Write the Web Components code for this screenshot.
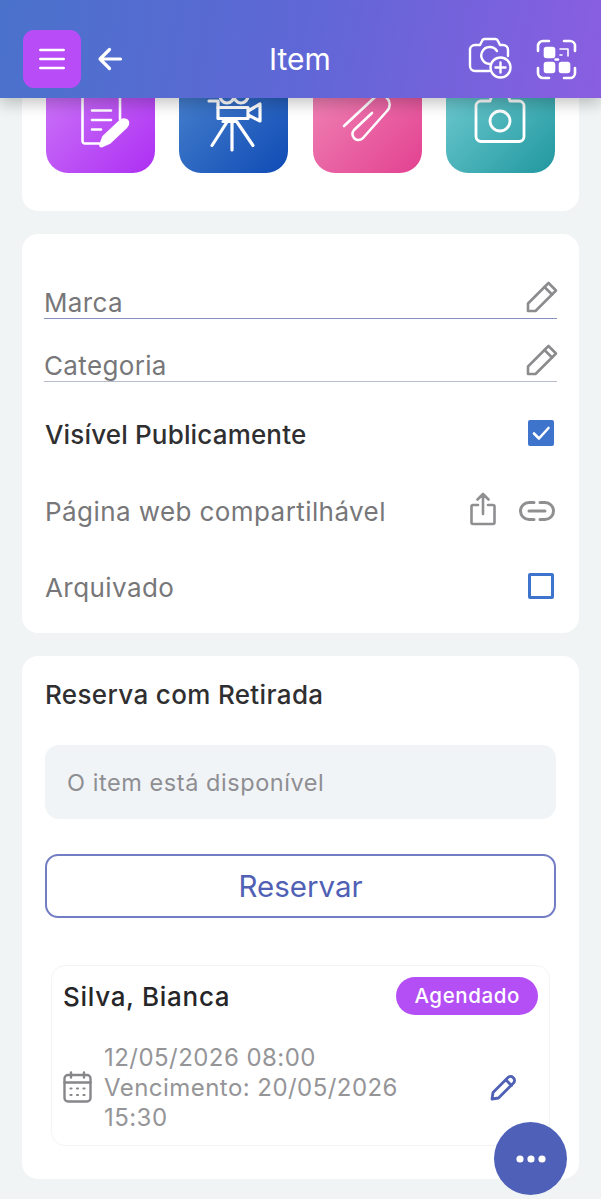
<!DOCTYPE html>
<html lang="pt">
<head>
<meta charset="utf-8">
<title>Item</title>
<style>
  html, body { margin: 0; padding: 0; }
  body {
    width: 601px;
    height: 1199px;
    overflow: hidden;
    background: #f0f4f5;
    font-family: Inter, "Liberation Sans", sans-serif;
  }
</style>
</head>
<body>
<item-page></item-page>

<script>
class AppHeader extends HTMLElement {
  constructor() {
    super();
    this.attachShadow({ mode: 'open' });
  }

  connectedCallback() {
    this.shadowRoot.innerHTML = `
      <style>
        :host {
          display: grid;
          grid-template-columns: 1fr auto 1fr;
          align-items: center;
          height: 98px;
          padding: 20px 24px 0 23px;
          box-sizing: border-box;
          position: relative;
          z-index: 5;
          color: #fff;
          background: linear-gradient(100deg, #4a72cb 0%, #5f67d6 50%, #8a5ee1 100%);
          box-shadow: 0 6px 14px rgba(0, 0, 0, 0.22);
        }
        .left, .right { display: flex; align-items: center; }
        .right { justify-content: flex-end; gap: 24px; }
        .menu {
          width: 58px;
          height: 58px;
          border-radius: 11px;
          background: #b84cf6;
          display: flex;
          align-items: center;
          justify-content: center;
        }
        .back { margin-left: 16px; display: flex; }
        .title { font-size: 30px; font-weight: 400; line-height: 38px; }
        .cam { margin-top: -3px; }
        svg { display: block; }
      </style>
      <div class="left">
        <div class="menu">
          <svg width="26" height="22" viewBox="0 0 26 22" fill="none" stroke="#fff" stroke-width="2.6" stroke-linecap="round">
            <path d="M1.3 2h23.4M1.300 11h23.4M1.300 20h23.400"/>
          </svg>
        </div>
        <div class="back">
          <svg width="26" height="26" viewBox="0 0 26 26" fill="none" stroke="#fff" stroke-width="3.2" stroke-linecap="round" stroke-linejoin="round">
            <path d="M23.500 13H3M12.500 3.500 3 13l9.500 9.500"/>
          </svg>
        </div>
      </div>
      <div class="title">Item</div>
      <div class="right">
        <svg class="cam" width="44" height="42" viewBox="0 0 44 42" fill="none" stroke="#fff" stroke-width="2.4" stroke-linecap="round" stroke-linejoin="round">
          <path d="M21 34H7a5 5 0 0 1-5-5V13a5 5 0 0 1 5-5h5l2-4a3 3 0 0 1 3-2h10a3 3 0 0 1 3 2l2 4h3a5 5 0 0 1 5 5v6"/>
          <path d="M22 27a8.500 8.500 0 1 1 7-13"/>
          <circle cx="32.500" cy="30.500" r="10"/>
          <path d="M32.500 25.500v10M27.500 30.500h10"/>
        </svg>
        <svg width="41" height="41" viewBox="0 0 41 41" fill="none" stroke="#fff" stroke-width="2.6" stroke-linecap="round" stroke-linejoin="round">
          <path d="M2 12V7a5 5 0 0 1 5-5h6M28 2h6a5 5 0 0 1 5 5v5M39 29v5a5 5 0 0 1-5 5h-6M13 39H7a5 5 0 0 1-5-5v-5"/>
          <rect x="9" y="9" width="9" height="9" rx="1.500" fill="#fff"/>
          <rect x="9" y="24" width="9" height="9" rx="1.500" fill="#fff"/>
          <rect x="24" y="24" width="9" height="9" rx="1.500" fill="#fff"/>
          <path d="M24 10h8v7M24 16h2" stroke-width="1.600"/>
          <path d="M19.500 20.500h2.500" stroke-width="2.400"/>
        </svg>
      </div>
    `;
  }
}

class ActionTile extends HTMLElement {
  constructor() {
    super();
    this.attachShadow({ mode: 'open' });
  }

  connectedCallback() {
    const from = this.getAttribute('from');
    const to = this.getAttribute('to');
    this.shadowRoot.innerHTML = `
      <style>
        :host {
          display: flex;
          width: 109px;
          height: 109px;
          border-radius: 22px;
          align-items: center;
          justify-content: center;
          background: linear-gradient(135deg, ${from}, ${to});
        }
      </style>
      <slot></slot>
    `;
  }
}

class InfoCard extends HTMLElement {
  constructor() {
    super();
    this.attachShadow({ mode: 'open' });
  }

  connectedCallback() {
    this.shadowRoot.innerHTML = `
      <style>
        :host {
          display: block;
          background: #fff;
          border-radius: 16px;
          box-sizing: border-box;
        }
      </style>
      <slot></slot>
    `;
  }
}

const PENCIL = `<svg width="32" height="32" viewBox="0 0 32 32" fill="none" stroke="#8c8c8f" stroke-width="2.6" stroke-linejoin="round" stroke-linecap="round">
  <path d="M2 30v-7.500L22.500 2l7.500 7.500L9.500 30z"/><path d="M18.500 6l7.500 7.500"/>
</svg>`;

class EditField extends HTMLElement {
  constructor() {
    super();
    this.attachShadow({ mode: 'open' });
  }

  connectedCallback() {
    const line = this.getAttribute('line') || '#8790ba';
    this.shadowRoot.innerHTML = `
      <style>
        :host {
          display: flex;
          justify-content: space-between;
          align-items: flex-end;
          height: 47px;
          border-bottom: 1px solid ${line};
          color: #77777a;
          font-size: 26px;
          line-height: 31px;
          letter-spacing: 0.35px;
        }
        svg { display: block; margin: 0 0 5px; }
        .icon { margin-right: -1px; }
      </style>
      <span class="label"><slot></slot></span>
      <span class="icon">${PENCIL}</span>
    `;
  }
}

class OptionRow extends HTMLElement {
  constructor() {
    super();
    this.attachShadow({ mode: 'open' });
  }

  connectedCallback() {
    this.shadowRoot.innerHTML = `
      <style>
        :host {
          display: flex;
          justify-content: space-between;
          align-items: center;
          height: 76.500px;
          padding: 0 3px 0 1px;
          color: #77777a;
          font-size: 26px;
          letter-spacing: 0.42px;
        }
        :host([strong]) { color: #2f2f31; font-weight: 500; letter-spacing: 0.16px; }
        .text { padding-top: 3px; }
        .end { display: flex; align-items: center; }
      </style>
      <span class="text"><slot></slot></span>
      <span class="end"><slot name="end"></slot></span>
    `;
  }
}

class CheckBox extends HTMLElement {
  constructor() {
    super();
    this.attachShadow({ mode: 'open' });
  }

  connectedCallback() {
    const checked = this.hasAttribute('checked');
    this.shadowRoot.innerHTML = `
      <style>
        :host {
          display: block;
          width: 26px;
          height: 26px;
          box-sizing: border-box;
          border: 3px solid #3f74cd;
          border-radius: 2px;
          background: ${checked ? '#3f74cd' : '#fff'};
        }
        svg { display: block; margin: -3px; }
      </style>
      ${checked ? `<svg width="26" height="26" viewBox="0 0 26 26" fill="none" stroke="#fff" stroke-width="2.6" stroke-linecap="round" stroke-linejoin="round"><path d="M6 13.500l5 5 9.500-10.500"/></svg>` : ''}
    `;
  }
}

class BookingCard extends HTMLElement {
  constructor() {
    super();
    this.attachShadow({ mode: 'open' });
  }

  connectedCallback() {
    this.shadowRoot.innerHTML = `
      <style>
        :host {
          display: block;
          border: 1px solid #f2f4f5;
          border-radius: 14px;
          padding: 11px 11px 10px 11px;
          box-sizing: border-box;
          height: 181px;
        }
        .top { display: flex; justify-content: space-between; align-items: center; height: 38px; }
        .name { font-size: 26px; font-weight: 500; color: #262628; letter-spacing: 0.7px; }
        .badge {
          height: 38px;
          line-height: 37px;
          padding: 0 18px;
          border-radius: 19px;
          background: #b44ff5;
          color: #fff;
          font-size: 20.500px;
          font-weight: 500;
          letter-spacing: 0.6px;
          box-sizing: border-box;
        }
        .body { display: flex; align-items: center; margin-top: 28px; }
        .cal { flex: none; display: block; margin-right: 12px; margin-top: -3px; }
        .dates {
          flex: none;
          width: 330px;
          color: #959598;
          font-size: 24px;
          line-height: 30px;
          letter-spacing: 0.45px;
        }
        .edit { display: block; margin-left: 56px; margin-top: -2px; }
      </style>
      <div class="top">
        <span class="name"><slot name="name"></slot></span>
        <span class="badge"><slot name="status"></slot></span>
      </div>
      <div class="body">
        <svg class="cal" width="29" height="32" viewBox="0 0 29 32" fill="none" stroke="#87878b" stroke-width="2.400" stroke-linecap="round" stroke-linejoin="round">
          <rect x="1.500" y="4" width="26" height="26.500" rx="3.500"/>
          <path d="M1.500 11.500h26M8 1.500v5M21 1.500v5"/>
          <path d="M7.500 17.500h1M14 17.500h1M20.500 17.500h1M7.500 24h1M14 24h1M20.500 24h1" stroke-width="2.200"/>
        </svg>
        <div class="dates"><slot></slot></div>
        <svg class="edit" width="27" height="27" viewBox="0 0 27 27" fill="none" stroke="#4f60b5" stroke-width="2.800" stroke-linecap="round" stroke-linejoin="round">
          <path d="M2 25l1-6.500L18 3.500a3.500 3.500 0 0 1 5 0l.5.500a3.500 3.500 0 0 1 0 5L8.500 24z"/><path d="M16 6l5.500 5.500"/>
        </svg>
      </div>
    `;
  }
}

class MoreButton extends HTMLElement {
  constructor() {
    super();
    this.attachShadow({ mode: 'open' });
  }

  connectedCallback() {
    this.shadowRoot.innerHTML = `
      <style>
        :host {
          position: absolute;
          left: 494px;
          top: 1122px;
          width: 73px;
          height: 73px;
          border-radius: 50%;
          background: #4f60b8;
          display: flex;
          align-items: center;
          justify-content: center;
          z-index: 6;
        }
      </style>
      <svg width="30" height="8" viewBox="0 0 30 8" fill="#fff">
        <circle cx="4" cy="4" r="3.600"/><circle cx="15" cy="4" r="3.600"/><circle cx="26" cy="4" r="3.600"/>
      </svg>
    `;
  }
}

class ItemPage extends HTMLElement {
  constructor() {
    super();
    this.attachShadow({ mode: 'open' });
  }

  connectedCallback() {
    this.shadowRoot.innerHTML = `
      <style>
        :host { display: block; height: 1199px; overflow: hidden; position: relative; }
        main {
          display: flex;
          flex-direction: column;
          gap: 23.500px;
          padding: 0 22px;
          margin-top: -34px;
        }
        .tiles-card { height: 146.500px; }
        .tiles {
          display: flex;
          justify-content: space-between;
          padding: 0 24px 0 24px;
        }
        .fields { height: 398.500px; padding: 37px 22px 0; }
        .options { margin-top: 13px; }
        .share { display: flex; align-items: center; gap: 22px; margin-right: -2px; }
        .share .link { margin-top: 2px; }
        .share .up { margin-top: -1px; }
        .booking { height: 523px; padding: 22px 23px 0; }
        h2 { margin: 0; font-size: 26px; line-height: 34px; font-weight: 500; color: #2f2f31; letter-spacing: 0.35px; }
        .notice {
          margin-top: 33px;
          height: 74px;
          line-height: 75px;
          padding: 0 22px;
          border-radius: 14px;
          background: #f1f4f6;
          color: #8e8e93;
          font-size: 23.500px;
          letter-spacing: 0.56px;
        }
        .reserve {
          margin-top: 35px;
          height: 64px;
          line-height: 60px;
          box-sizing: border-box;
          text-align: center;
          border: 2px solid #727dc4;
          border-radius: 13px;
          color: #4f60b5;
          font-size: 29.500px;
        }
        booking-card { margin: 47px 6px 0; }
        svg { display: block; overflow: visible; }
      </style>
      <app-header></app-header>
      <main>
        <info-card class="tiles-card">
          <div class="tiles">
            <action-tile from="#cf7cf8" to="#ad2ff3">
              <svg width="60" height="60" viewBox="0 0 60 60" fill="none" stroke="#fff" stroke-width="2.600" stroke-linecap="round" stroke-linejoin="round">
                <path d="M29 54.500H14a2.500 2.500 0 0 1-2.500-2.500V8A2.500 2.500 0 0 1 14 5.500h32.500A2.500 2.500 0 0 1 49 8v22"/>
                <path d="M21 21.500h19M21 31h19M21 40.500h9"/>
                <path d="M31 57.500c-1.500.5-2.500-.5-2-2l3-8 17-16c3-2.500 8-1.500 8.500 2 .3 2-.5 3.500-2 5L39 54z" fill="#fff" stroke-width="1.500"/>
              </svg>
            </action-tile>
            <action-tile from="#4d86cf" to="#0f4bb5">
              <svg width="56" height="56" viewBox="0 0 56 56" fill="none" stroke="#fff" stroke-width="3.200" stroke-linecap="round" stroke-linejoin="round">
                <circle cx="21" cy="5" r="7"/><circle cx="35" cy="5" r="7"/>
                <path d="M12 16.500h30v11H12zM42 20l12-7v17l-12-6"/>
                <path d="M3 10h9v6.500"/>
                <path d="M17 30.500h14M26 31v28M21 31 6 54.500M31 31l16 23.500"/>
              </svg>
            </action-tile>
            <action-tile from="#f08ab8" to="#e34191">
              <svg width="60" height="60" viewBox="0 0 60 60" fill="none" stroke="#fff" stroke-width="2.600" stroke-linecap="round" stroke-linejoin="round">
                <path d="M7 37 37 9a9 9 0 0 1 13 13L26 49a6 6 0 0 1-9-8L35 24"/>
              </svg>
            </action-tile>
            <action-tile from="#77d0d6" to="#21979f">
              <svg width="54" height="52" viewBox="0 0 54 52" fill="none" stroke="#fff" stroke-width="2.800" stroke-linecap="round" stroke-linejoin="round">
                <path d="M8 8h9l1-3a3 3 0 0 1 3-2h12a3 3 0 0 1 3 2l1 3h9a5 5 0 0 1 5 5v30.500a5 5 0 0 1-5 5H8a5 5 0 0 1-5-5V13a5 5 0 0 1 5-5z"/>
                <circle cx="27" cy="28" r="10"/>
              </svg>
            </action-tile>
          </div>
        </info-card>

        <info-card class="fields">
          <edit-field>Marca</edit-field>
          <edit-field line="#b6bccb" style="margin-top:15px">Categoria</edit-field>
          <div class="options">
            <option-row strong>Visível Publicamente<check-box slot="end" checked></check-box></option-row>
            <option-row>Página web compartilhável
              <span slot="end" class="share">
                <svg class="up" width="26" height="34" viewBox="0 0 26 34" fill="none" stroke="#8f8f92" stroke-width="2.600" stroke-linecap="round" stroke-linejoin="round">
                  <path d="M8 13H3a1.500 1.500 0 0 0-1.500 1.500v16A1.500 1.500 0 0 0 3 32h20a1.500 1.500 0 0 0 1.500-1.500v-16A1.500 1.500 0 0 0 23 13h-5M13 22V2M7.500 7.500 13 2l5.500 5.500"/>
                </svg>
                <svg class="link" width="38" height="22" viewBox="0 0 38 22" fill="none" stroke="#8f8f92" stroke-width="3" stroke-linecap="round" stroke-linejoin="round">
                  <path d="M16 2.500H11a8.500 8.500 0 0 0 0 17h5M22 2.500h5a8.500 8.500 0 0 1 0 17h-5M11 11h16"/>
                </svg>
              </span>
            </option-row>
            <option-row>Arquivado<check-box slot="end"></check-box></option-row>
          </div>
        </info-card>

        <info-card class="booking">
          <h2>Reserva com Retirada</h2>
          <div class="notice">O item está disponível</div>
          <div class="reserve">Reservar</div>
          <booking-card>
            <span slot="name">Silva, Bianca</span>
            <span slot="status">Agendado</span>
            12/05/2026 08:00<br>Vencimento: 20/05/2026 15:30
          </booking-card>
        </info-card>
      </main>
      <more-button></more-button>
    `;
  }
}

customElements.define('app-header', AppHeader);
customElements.define('action-tile', ActionTile);
customElements.define('info-card', InfoCard);
customElements.define('edit-field', EditField);
customElements.define('option-row', OptionRow);
customElements.define('check-box', CheckBox);
customElements.define('booking-card', BookingCard);
customElements.define('more-button', MoreButton);
customElements.define('item-page', ItemPage);
</script>
</body>
</html>
